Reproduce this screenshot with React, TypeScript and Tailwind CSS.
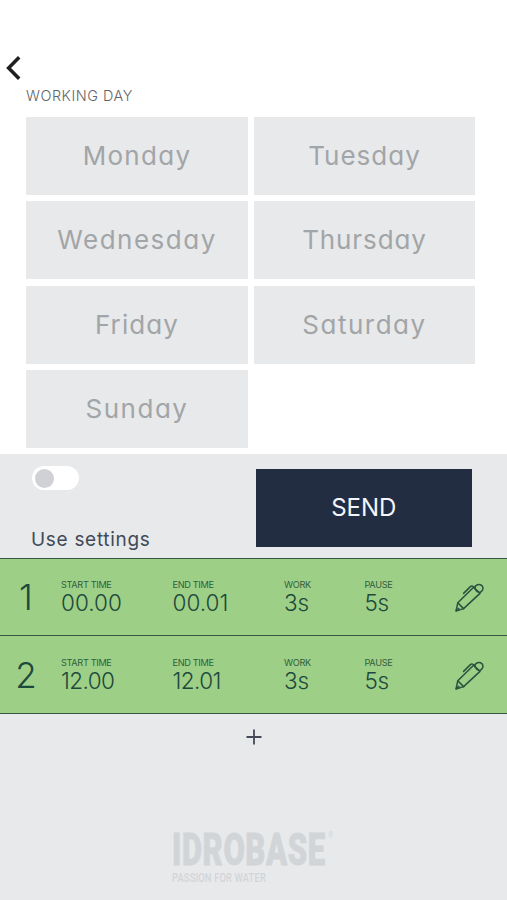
const days = [
  { name: 'Monday', tracking: 'tracking-[1.3px]' },
  { name: 'Tuesday', tracking: 'tracking-[1px]' },
  { name: 'Wednesday', tracking: 'tracking-[1.5px]' },
  { name: 'Thursday', tracking: 'tracking-[0.9px]' },
  { name: 'Friday', tracking: 'tracking-[1.1px]' },
  { name: 'Saturday', tracking: 'tracking-[1.5px]' },
  { name: 'Sunday', tracking: 'tracking-[1.5px]' },
];

const slots = [
  { id: 1, start: '00.00', end: '00.01', work: '3s', pause: '5s', row: 'h-[77px] pt-[19px]', tracking: 'tracking-[0px]' },
  { id: 2, start: '12.00', end: '12.01', work: '3s', pause: '5s', row: 'h-[78px] pt-[20px]', tracking: 'tracking-[-0.6px]' },
];

function Field({ label, value, width, tracking = 'tracking-[-0.25px]' }: { label: string; value: string; width: string; tracking?: string }) {
  return (
    <div className={`${width} shrink-0 whitespace-nowrap`}>
      <div className="text-[9.2px] leading-[13px] tracking-[-0.35px] text-[#2f5f40]">{label}</div>
      <div className={`text-[22.5px] leading-[24px] font-light text-[#1d4a3c] ${tracking}`}>{value}</div>
    </div>
  );
}

function Pen() {
  return (
    <svg className="h-[30px] w-[30px] shrink-0" viewBox="0 0 30 30" fill="none" stroke="#28533f" strokeWidth="1.5" strokeLinejoin="round" strokeLinecap="round">
      <path d="M2 28 L3.8 19.8 L19.6 4.2 L26 10.4 L9.6 25.6 Z" />
      <path d="M3.8 19.8 L9.6 25.6 M2.4 27.6 L4.8 25.4" />
      <path d="M20.8 5.4 C21 1.6 25.4 0.4 27.8 2.6 C30 5 28.8 8.4 25.6 9.6" />
      <path d="M20.8 5.4 C21.8 7.6 23.4 9 25.6 9.6" />
      <path d="M9.6 10.4 L16.4 3.6 Q17.4 2.6 18.6 3.2 L20.4 4.2" />
    </svg>
  );
}

export default function App() {
  return (
    <div className="flex h-[900px] w-[507px] flex-col overflow-hidden bg-white font-['Inter',sans-serif] [font-feature-settings:'cv11']">
      <header className="h-[117px] shrink-0 pt-[56px]">
        <svg className="ml-[6px] h-[24px] w-[15px]" viewBox="0 0 15 24" fill="none" stroke="#202020" strokeWidth="3.5">
          <path d="M13.2 1.2 L2.6 12 L13.2 22.8" />
        </svg>
        <h1 className="mt-[7px] ml-[26px] text-[14.4px] leading-[18px] font-light tracking-[0.55px] text-[#636567]">WORKING DAY</h1>
      </header>

      <main className="grid h-[337px] shrink-0 auto-rows-[78px] grid-cols-[222px_221px] content-start gap-x-[6px] gap-y-[6.3px] pl-[26px]">
        {days.map((day) => (
          <button key={day.name} className={`bg-[#e8e9eb] text-[26px] leading-[32px] text-[#a2a5a7] ${day.tracking}`}>
            {day.name}
          </button>
        ))}
      </main>

      <section className="flex h-[104px] shrink-0 bg-[#e8e9eb]">
        <div className="w-[256px] pt-[12px] pl-[31px]">
          <div className="ml-px flex h-[24px] w-[47px] items-center rounded-full bg-white pl-[3px]">
            <div className="h-[19px] w-[19px] rounded-full bg-[#cfd1d4]" />
          </div>
          <div className="mt-[38px] text-[19px] leading-[24px] tracking-[0.7px] text-[#414a58]">Use settings</div>
        </div>
        <button className="mt-[15px] h-[78px] w-[215.5px] bg-[#222d41] text-[24px] text-[#f2f6fc]">SEND</button>
      </section>

      <div className="shrink-0 border-t border-[#38573f]">
        {slots.map((slot) => (
          <div key={slot.id} className={`flex border-b border-[#38573f] bg-[#9ecf86] ${slot.row}`}>
            <div className="w-[61px] shrink-0 pr-[9px] text-center text-[35px] leading-[38px] font-light text-[#1d4a3c]">{slot.id}</div>
            <Field label="START TIME" value={slot.start} width="w-[111.5px]" tracking={slot.tracking} />
            <Field label="END TIME" value={slot.end} width="w-[111.5px]" tracking={slot.tracking} />
            <Field label="WORK" value={slot.work} width="w-[80.5px]" />
            <Field label="PAUSE" value={slot.pause} width="w-[89px]" />
            <div className="pt-[5px]">
              <Pen />
            </div>
          </div>
        ))}
      </div>

      <footer className="flex grow flex-col bg-[#e8e9eb]">
        <svg className="mt-[15px] ml-[246px] h-[16px] w-[16px]" viewBox="0 0 16 16" stroke="#454956" strokeWidth="1.8">
          <path d="M8 0.5 V15.5 M0.5 8 H15.5" />
        </svg>
        <div className="mt-[83px] ml-[172px] font-['Roboto',sans-serif] text-[#d2d5d8]">
          <div className="flex h-[43px] origin-left scale-x-[0.69]">
            <span className="text-[45px] leading-[43px] font-black tracking-[0.8px] [-webkit-text-stroke:0.8px_#d2d5d8]">IDROBASE</span>
            <span className="ml-[4px] text-[9px] leading-[14px]">®</span>
          </div>
          <div className="origin-left scale-x-[0.75] text-[12.5px] leading-[14px] font-medium tracking-[0.2px] whitespace-nowrap">PASSION FOR WATER</div>
        </div>
      </footer>
    </div>
  );
}
